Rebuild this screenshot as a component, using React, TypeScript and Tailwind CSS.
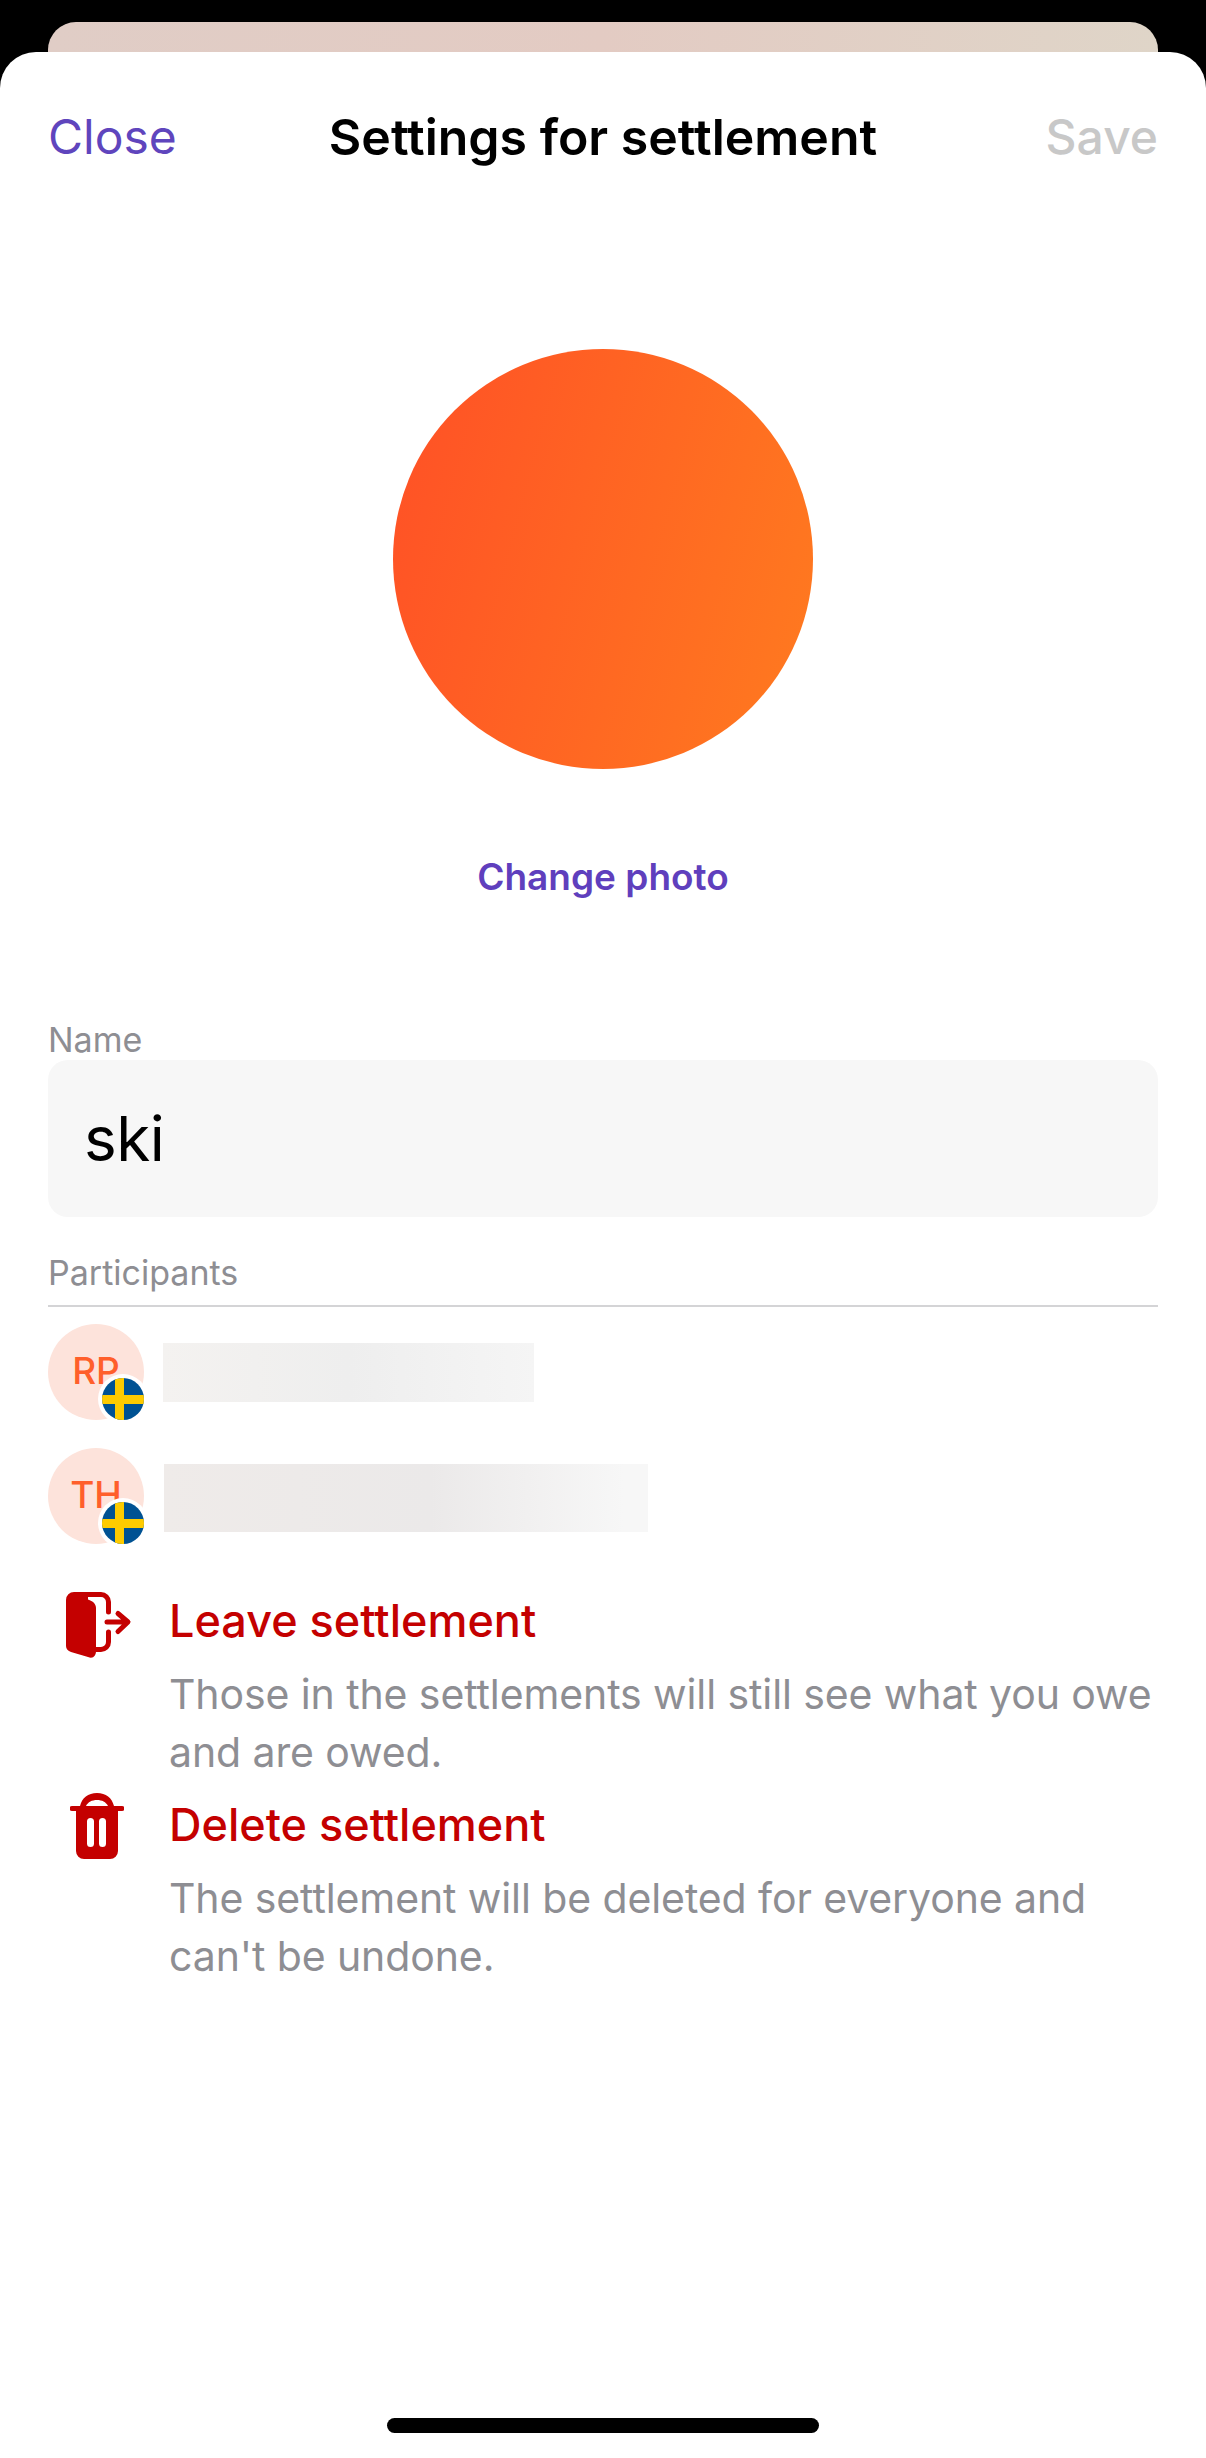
const FONT = "font-['Inter',sans-serif]";

function SwedishFlag() {
  return (
    <svg viewBox="0 0 42 42" className="h-[42px] w-[42px]" aria-hidden>
      <clipPath id="flag-clip">
        <circle cx="21" cy="21" r="21" />
      </clipPath>
      <g clipPath="url(#flag-clip)">
        <rect width="42" height="42" fill="#005293" />
        <rect x="13" width="9" height="42" fill="#fecb00" />
        <rect y="17" width="42" height="9" fill="#fecb00" />
      </g>
    </svg>
  );
}

function Participant({ initials, barClass }: { initials: string; barClass: string }) {
  return (
    <div className="flex items-center">
      <div className="relative h-[96px] w-[96px] shrink-0 rounded-full bg-[#fde3db]">
        <div className="pt-[25px] text-center text-[37px] leading-[44px] font-medium text-[#ff5f2b]">
          {initials}
        </div>
        <div className="absolute -right-[4px] -bottom-[4px] rounded-full bg-white p-[4px]">
          <SwedishFlag />
        </div>
      </div>
      <div className={barClass} />
    </div>
  );
}

function DangerAction({
  icon,
  title,
  body,
}: {
  icon: React.ReactNode;
  title: string;
  body: string[];
}) {
  return (
    <div className="flex">
      <div className="flex w-[121px] shrink-0 justify-center pr-[24px]">{icon}</div>
      <div>
        <div className="text-[45px] leading-[58px] font-medium text-[#c40000]">{title}</div>
        <div className="mt-[15px] text-[41px] leading-[58px] tracking-[-0.1px] text-[#8e8e93]">
          {body.map((line) => (
            <div key={line} className="whitespace-nowrap">
              {line}
            </div>
          ))}
        </div>
      </div>
    </div>
  );
}

export default function App() {
  return (
    <div className={`${FONT} relative h-[2458px] w-[1206px] overflow-hidden bg-black`}>
      {/* card behind the sheet */}
      <div className="mx-[48px] mt-[22px] h-[60px] rounded-t-[28px] bg-gradient-to-r from-[#e0cdc6] via-[#e3cbc3] to-[#dfd5c8]" />

      {/* sheet */}
      <div className="absolute inset-x-0 top-[52px] bottom-0 rounded-t-[36px] bg-white">
        <div className="grid grid-cols-[1fr_auto_1fr] items-center px-[48px] pt-[57px]">
          <span className="text-[48px] leading-[56px] text-[#5f45bd]">Close</span>
          <span className="text-[50px] leading-[56px] font-semibold text-black">
            Settings for settlement
          </span>
          <span className="text-right text-[48px] leading-[56px] font-medium text-[#c8c8c8]">Save</span>
        </div>

        {/* photo */}
        <div className="mt-[184px] flex flex-col items-center">
          <div className="h-[420px] w-[420px] rounded-full bg-[linear-gradient(105deg,#ff5026,#ff7b1f)]" />
          <div className="mt-[86px] text-[37px] leading-[44px] font-semibold text-[#5f3fbd]">
            Change photo
          </div>
        </div>

        {/* form */}
        <div className="px-[48px]">
          <div className="mt-[121px] text-[34px] leading-[40px] text-[#8e8e93]">Name</div>
          <div className="flex h-[157px] items-center rounded-[20px] bg-[#f7f7f7] px-[36px] text-[62px] tracking-[-0.5px] text-black">
            ski
          </div>
          <div className="mt-[36px] border-b-2 border-[#d4d4d6] pb-[12px] text-[34px] leading-[40px] text-[#8e8e93]">
            Participants
          </div>
          <div className="mt-[17px] flex flex-col gap-[28px]">
            <Participant
              initials="RP"
              barClass="ml-[19px] h-[59px] w-[371px] bg-gradient-to-r from-[#f4f2f0] via-[#eeeeee] to-[#f5f5f5]"
            />
            <Participant
              initials="TH"
              barClass="mt-[3px] ml-[20px] h-[68px] w-[484px] bg-[linear-gradient(90deg,#efebe9,#ebe9e9_55%,#f7f7f7_95%)]"
            />
          </div>
          <div className="mt-[48px] flex flex-col gap-[15px]">
            <DangerAction
              icon={
                <svg viewBox="0 0 66 66" className="ml-[4px] h-[66px] w-[66px]" fill="#c40000" aria-hidden>
                  <path d="M8 0H22V7.500C27 9 30 12 30 16V59C30 64 27 67 22 65L5 60C2 59 0 57 0 54V8A8 8 0 0 1 8 0Z" />
                  <path
                    d="M10 2.500H35a7.500 7.500 0 0 1 7.500 7.500V20M42.500 40V50a7.500 7.500 0 0 1-7.500 7.500H28M41 30H61M52 21.500L62 30L52 39.500"
                    fill="none"
                    stroke="#c40000"
                    strokeWidth="5"
                    strokeLinecap="round"
                    strokeLinejoin="round"
                  />
                </svg>
              }
              title="Leave settlement"
              body={["Those in the settlements will still see what you owe", "and are owed."]}
            />
            <DangerAction
              icon={
                <svg viewBox="0 0 54 66" className="mt-[-3px] h-[66px] w-[54px]" fill="#c40000" aria-hidden>
                  <path
                    fillRule="evenodd"
                    d="M27 0c9 0 15 5 17 13h8a2.500 2.500 0 0 1 0 5h-4v40a8 8 0 0 1-8 8H14a8 8 0 0 1-8-8V18H2a2.500 2.500 0 0 1 0-5h8C12 5 18 0 27 0zm0 7c-5 0-9 2-11 6h22c-2-4-6-6-11-6zM20.500 25a3.500 3.500 0 0 0-3.500 3.500v22a3.500 3.500 0 0 0 7 0v-22a3.500 3.500 0 0 0-3.500-3.500zm12 0a3.500 3.500 0 0 0-3.500 3.500v22a3.500 3.500 0 0 0 7 0v-22a3.500 3.500 0 0 0-3.500-3.500z"
                  />
                </svg>
              }
              title="Delete settlement"
              body={["The settlement will be deleted for everyone and", "can't be undone."]}
            />
          </div>
        </div>

        {/* home indicator */}
        <div className="absolute bottom-[25px] left-[387px] h-[15px] w-[432px] rounded-full bg-black" />
      </div>
    </div>
  );
}
